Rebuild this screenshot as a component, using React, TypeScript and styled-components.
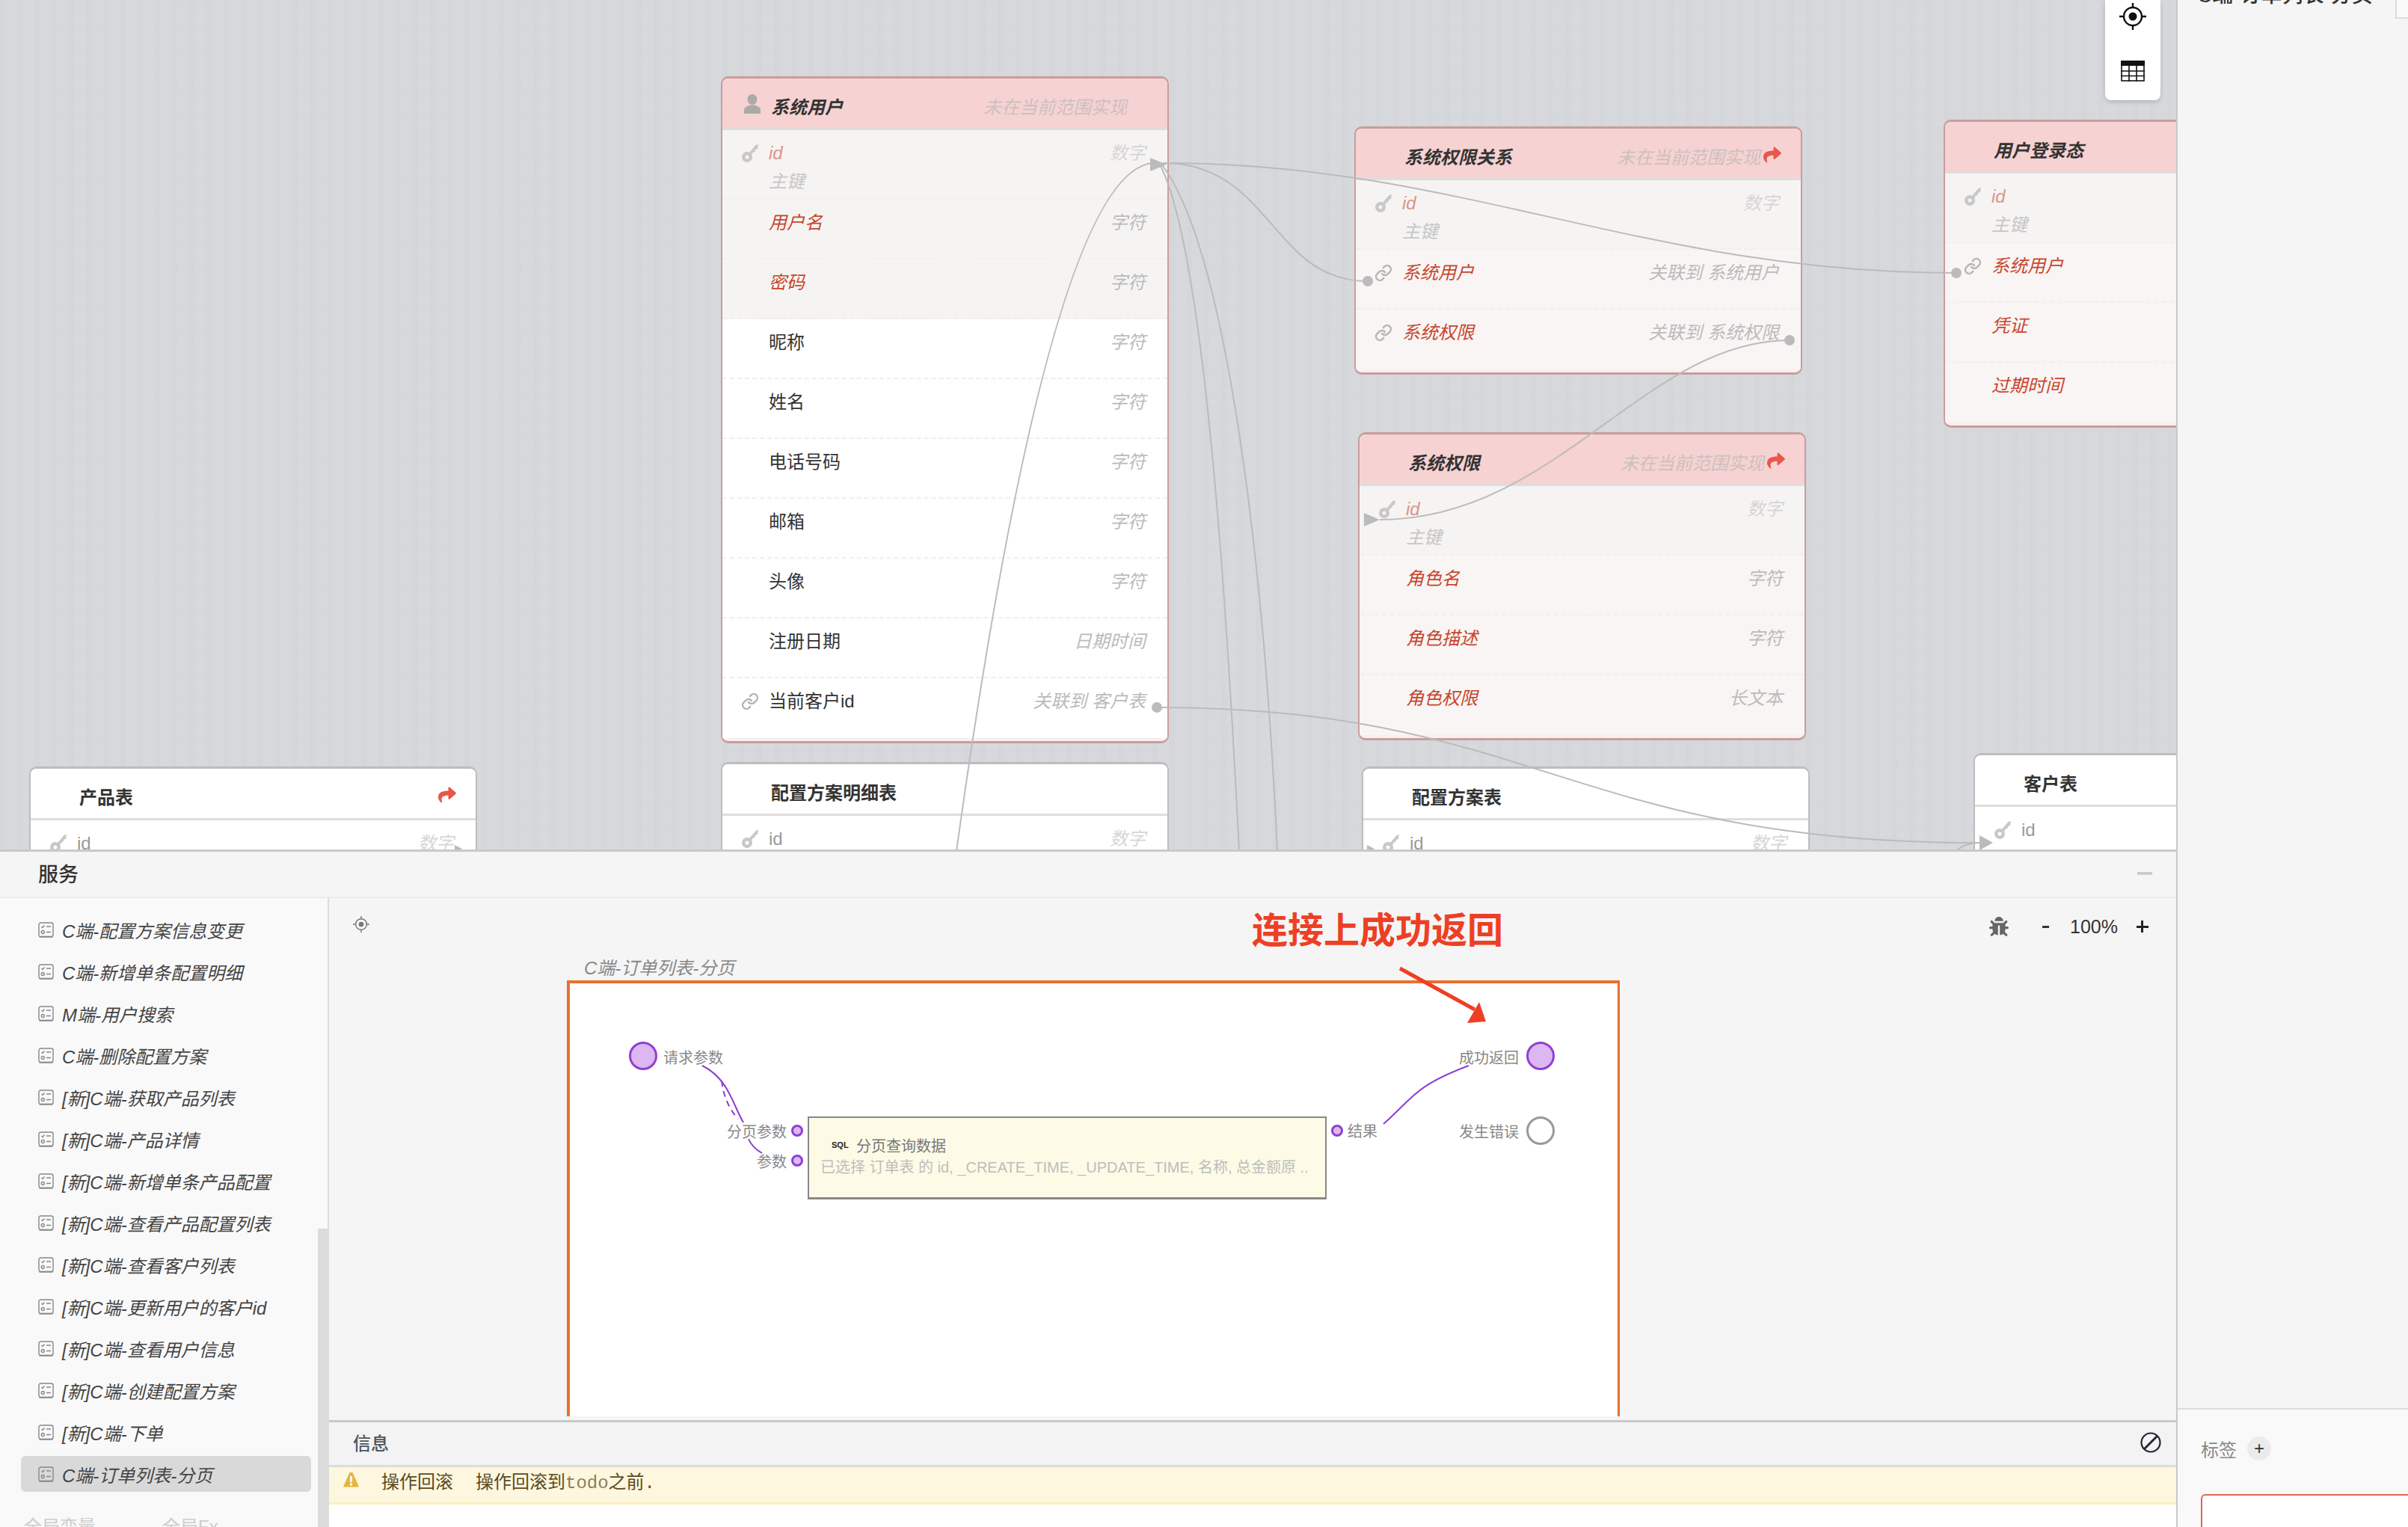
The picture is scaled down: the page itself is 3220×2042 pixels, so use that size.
import React from 'react';
import styled, { createGlobalStyle } from 'styled-components';
import { FaBug, FaShare } from 'react-icons/fa';
import { Link as LinkIcon } from 'lucide-react';

const FONT = `"Liberation Sans", "Noto Sans CJK SC", sans-serif`;
// flow items are given in page coordinates, these turn them into offsets in the flow area
const FLOW_X = 440;
const FLOW_Y = 1203;

const GlobalStyle = createGlobalStyle`
  html, body { margin: 0; padding: 0; background: #f5f5f5; }
  body { font-family: ${FONT}; color: #333; }
  * { box-sizing: border-box; }
`;

const Page = styled.div`
  position: relative;
  width: 3220px;
  height: 2042px;
  overflow: hidden;
  display: flex;
`;

const LeftColumn = styled.div`
  width: 2910px;
  height: 100%;
  display: flex;
  flex-direction: column;
`;

/* ---------- table canvas ---------- */

const Canvas = styled.div`
  position: relative;
  height: 1136px;
  flex: none;
  overflow: hidden;
  background-color: #d6d8dc;
  background-image:
    repeating-linear-gradient(0deg, rgba(255, 255, 255, 0.035) 0 5px, transparent 5px 17px),
    repeating-linear-gradient(90deg, rgba(120, 125, 135, 0.025) 0 7px, transparent 7px 23px);
`;

const Table = styled.div<{ $x: number; $y: number; $red?: boolean }>`
  position: absolute;
  left: ${p => p.$x}px;
  top: ${p => p.$y}px;
  width: 599px;
  border-radius: 10px;
  overflow: hidden;
  background: ${p => (p.$red ? '#f8f0ef' : '#fff')};
  border: 2px solid ${p => (p.$red ? '#c99d9b' : '#bdbdbd')};
  border-top-width: 3px;
  border-bottom-width: 3px;
  padding-bottom: ${p => (p.$red ? '4px' : '0')};
`;

const TableHead = styled.div<{ $red?: boolean }>`
  height: 69px;
  display: flex;
  align-items: center;
  padding: 7px 26px 0 0;
  font-size: 24px;
  background: ${p => (p.$red ? '#f6d2d2' : '#fff')};
  border-bottom: 3px solid #e0dddd;
`;

const HeadIcon = styled.div`
  width: 65px;
  flex: none;
  display: flex;
  justify-content: flex-end;
  padding-right: 14px;
  margin-top: -5px;
`;

const TableTitle = styled.span<{ $red?: boolean }>`
  flex: 1;
  font-weight: 700;
  color: #333;
  font-style: ${p => (p.$red ? 'italic' : 'normal')};
`;

const TableNote = styled.span`
  font-style: italic;
  color: #cdc0c0;
  margin-right: 4px;
`;

const RedirectSlot = styled.span`
  width: 24px;
  height: 24px;
  flex: none;
  color: #e8574b;
  margin-top: -4px;
  font-size: 24px;
  line-height: 24px;
`;

const Row = styled.div<{ $tone: 'plain' | 'red' | 'grey' }>`
  display: flex;
  align-items: flex-start;
  padding: 15px 29px 0 25px;
  height: 80px;
  font-size: 24px;
  line-height: 32px;
  background: ${p => (p.$tone === 'plain' ? '#fff' : p.$tone === 'grey' ? '#f6f4f3' : '#f8f5f4')};
  border-bottom: 2px dashed #efefef;
  &:last-child { border-bottom: none; }
`;

const IdRow = styled(Row)`
  height: 93px;
`;

const RowIcon = styled.span`
  width: 37px;
  height: 32px;
  flex: none;
  display: flex;
  align-items: center;
  color: #c8c8c8;
`;

const RowMain = styled.div`
  flex: 1;
`;

const FieldName = styled.div<{ $kind: 'plain' | 'red' | 'idRed' | 'idPlain' }>`
  font-style: ${p => (p.$kind === 'red' || p.$kind === 'idRed' ? 'italic' : 'normal')};
  color: ${p =>
    p.$kind === 'red' ? '#c9452d' : p.$kind === 'idRed' ? '#dd9488' : p.$kind === 'idPlain' ? '#999' : '#333'};
`;

const FieldSub = styled.div`
  margin-top: 6px;
  font-style: italic;
  color: #c6c6c6;
`;

const FieldType = styled.span<{ $faint?: boolean }>`
  font-style: italic;
  color: ${p => (p.$faint ? '#d6d6d6' : '#bbb')};
`;

const EdgeLayer = styled.svg`
  position: absolute;
  left: 0;
  top: 0;
  pointer-events: none;
`;

const Toolbar = styled.div`
  position: absolute;
  left: 2815px;
  top: 0;
  width: 74px;
  height: 134px;
  padding-top: 4px;
  display: flex;
  flex-direction: column;
  align-items: center;
  gap: 41px;
  background: #fff;
  border-radius: 0 0 8px 8px;
  box-shadow: 0 2px 6px rgba(0, 0, 0, 0.18);
`;

/* ---------- service panel ---------- */

const ServicePanel = styled.div`
  flex: 1;
  min-height: 0;
  display: flex;
  flex-direction: column;
  background: #f5f5f5;
  border-top: 3px solid #c9c9c9;
`;

const ServiceHead = styled.div`
  height: 62px;
  flex: none;
  display: flex;
  align-items: center;
  justify-content: space-between;
  padding: 0 32px 3px 51px;
  border-bottom: 2px solid #ececec;
  font-size: 27px;
  font-weight: 500;
  color: #333;
`;

const Minimize = styled.span`
  width: 20px;
  height: 4px;
  background: #ccc;
`;

const ServiceBody = styled.div`
  flex: 1;
  min-height: 0;
  display: flex;
`;

const Sidebar = styled.div`
  position: relative;
  width: 440px;
  flex: none;
  padding: 18px 0 0 28px;
  background: #f9f9f9;
  border-right: 2px solid #dcdcdc;
  overflow: hidden;
`;

const ServiceList = styled.div`
  width: 388px;
  display: flex;
  flex-direction: column;
  gap: 8px;
`;

const ServiceItem = styled.div<{ $active?: boolean }>`
  height: 48px;
  display: flex;
  align-items: center;
  gap: 11px;
  padding-left: 23px;
  border-radius: 6px;
  font-size: 24px;
  font-style: italic;
  color: #444;
  white-space: nowrap;
  background: ${p => (p.$active ? '#d9d9d9' : 'transparent')};
`;

const SideTabs = styled.div`
  display: flex;
  gap: 89px;
  margin: 27px 0 0 4px;
  font-size: 24px;
  color: #ccc;
`;

const ScrollThumb = styled.div`
  position: absolute;
  right: 0;
  top: 442px;
  bottom: 0;
  width: 13px;
  background: #dcdcdc;
`;

const MainColumn = styled.div`
  flex: 1;
  min-width: 0;
  display: flex;
  flex-direction: column;
`;

const FlowCanvas = styled.div`
  position: relative;
  flex: 1;
  min-height: 0;
  overflow: hidden;
`;

const LocateButton = styled.div`
  position: absolute;
  left: ${483 - 11 - FLOW_X}px;
  top: ${1238 - 11 - FLOW_Y}px;
  color: #777;
`;

const ZoomBar = styled.div`
  position: absolute;
  left: ${2660 - FLOW_X}px;
  top: ${1225 - FLOW_Y}px;
  display: flex;
  align-items: center;
  height: 32px;
  font-size: 25px;
  color: #333;
  svg { color: #666; }
`;

const ZoomMinus = styled.span`
  margin-left: 45px;
  width: 9px;
  height: 3px;
  background: #333;
`;

const ZoomValue = styled.span`
  margin-left: 28px;
`;

const ZoomPlus = styled.span`
  position: relative;
  margin-left: 25px;
  width: 16px;
  height: 3px;
  background: #222;
  &::after {
    content: '';
    position: absolute;
    left: 6px;
    top: -7px;
    width: 3px;
    height: 16px;
    background: #222;
  }
`;

const Annotation = styled.div`
  position: absolute;
  left: ${1674 - FLOW_X}px;
  top: ${1218 - FLOW_Y}px;
  font-size: 48px;
  line-height: 58px;
  font-weight: 700;
  color: #ee3f24;
  white-space: nowrap;
`;

const FlowTitle = styled.div`
  position: absolute;
  left: ${781 - FLOW_X}px;
  top: ${1281 - FLOW_Y}px;
  font-size: 24px;
  line-height: 32px;
  font-style: italic;
  color: #888;
`;

const FlowFrame = styled.div`
  position: absolute;
  left: ${758 - FLOW_X}px;
  top: ${1313 - FLOW_Y}px;
  width: 1408px;
  height: 583px;
  background: #fff;
  border: 3px solid #e8702f;
  border-top-width: 4px;
  border-left-width: 4px;
  border-bottom: none;
`;

const FlowLabel = styled.span<{ $x: number; $y: number; $end?: boolean }>`
  position: absolute;
  left: ${p => p.$x - FLOW_X}px;
  top: ${p => p.$y - FLOW_Y}px;
  transform: translate(${p => (p.$end ? '-100%' : '0')}, -50%);
  font-size: 20px;
  color: #888;
  white-space: nowrap;
`;

const Terminal = styled.span<{ $x: number; $y: number; $empty?: boolean }>`
  position: absolute;
  left: ${p => p.$x - 19 - FLOW_X}px;
  top: ${p => p.$y - 19 - FLOW_Y}px;
  width: 38px;
  height: 38px;
  border-radius: 50%;
  background: ${p => (p.$empty ? '#fff' : '#dcb7f1')};
  border: 3px solid ${p => (p.$empty ? '#999' : '#9040d2')};
`;

const Port = styled.span<{ $x: number; $y: number }>`
  position: absolute;
  left: ${p => p.$x - 8 - FLOW_X}px;
  top: ${p => p.$y - 8 - FLOW_Y}px;
  width: 16px;
  height: 16px;
  border-radius: 50%;
  background: #dcb7f1;
  border: 3px solid #9040d2;
`;

const SqlBox = styled.div`
  position: absolute;
  left: ${1080 - FLOW_X}px;
  top: ${1495 - FLOW_Y}px;
  width: 694px;
  height: 111px;
  padding: 22px 0 0 15px;
  background: #fdfbe6;
  border: 2px solid #888;
  border-bottom-width: 3px;
  white-space: nowrap;
`;

const SqlTitle = styled.div`
  display: flex;
  align-items: center;
  height: 28px;
  padding-left: 15px;
  font-size: 20px;
  color: #777;
`;

const SqlBadge = styled.span`
  width: 33px;
  font-size: 11px;
  font-weight: 700;
  color: #222;
`;

const SqlDesc = styled.div`
  margin-top: 2px;
  line-height: 28px;
  font-size: 20px;
  color: #bdbdbd;
`;

const InfoPanel = styled.div`
  flex: none;
  height: 143px;
  background: #fff;
  border-top: 3px solid #c9c9c9;
`;

const InfoHead = styled.div`
  height: 60px;
  display: flex;
  align-items: center;
  justify-content: space-between;
  padding: 0 20px 4px 32px;
  background: #f3f3f3;
  border-bottom: 3px solid #dcdcdc;
  font-size: 24px;
  font-weight: 500;
  color: #4a5560;
`;

const InfoMessage = styled.div`
  height: 50px;
  display: flex;
  align-items: flex-start;
  padding: 5px 0 0 19px;
  background: #fdf7df;
  border-bottom: 3px solid #fbf0bd;
  font-family: "Liberation Mono", "Noto Sans CJK SC", monospace;
  font-size: 24px;
  line-height: 34px;
  color: #5c4a22;
  svg { margin-top: 1px; }
`;

const InfoTitle = styled.span`
  margin: 0 30px 0 30px;
`;

const InfoCode = styled.span`
  color: #8d7d5a;
`;

/* ---------- right panel ---------- */

const RightPanel = styled.div`
  flex: 1;
  min-width: 0;
  display: flex;
  flex-direction: column;
  border-left: 2px solid #c9c9c9;
  overflow: hidden;
`;

const RightTop = styled.div`
  height: 1885px;
  flex: none;
  padding-left: 26px;
  background: #f5f5f5;
  border-bottom: 2px solid #dcdcdc;
  position: relative;
`;

const RightTitle = styled.div`
  margin-top: -26px;
  font-size: 28px;
  line-height: 40px;
  font-weight: 500;
  color: #333;
  white-space: nowrap;
`;

const TopCorner = styled.div`
  position: absolute;
  right: 0;
  top: 0;
  width: 17px;
  height: 25px;
  border: 2px solid #dcdcdc;
  border-top: none;
  border-right: none;
  background: #fafafa;
`;

const RightBottom = styled.div`
  flex: 1;
  padding: 36px 0 0 31px;
  background: #f9f9f9;
`;

const TagRow = styled.div`
  display: flex;
  align-items: center;
  gap: 14px;
  height: 32px;
  font-size: 24px;
  color: #888;
`;

const TagAdd = styled.span`
  width: 32px;
  height: 32px;
  border-radius: 50%;
  display: flex;
  align-items: center;
  justify-content: center;
  background: #ebebeb;
  color: #333;
  font-size: 24px;
`;

const RedBox = styled.div`
  width: 320px;
  height: 80px;
  margin-top: 45px;
  background: #fff;
  border: 2px solid #e26558;
  border-radius: 6px;
`;

const WatermarkLayer = styled.svg`
  position: absolute;
  left: 0;
  top: 0;
  pointer-events: none;
  font-family: "Liberation Sans", sans-serif;
  font-size: 25px;
  fill: rgba(0, 0, 0, 0.02);
`;

/* ---------- icons ---------- */

const KeyIcon = () => (
  <svg width="24" height="24" viewBox="0 0 24 24" fill="currentColor">
    <path fillRule="evenodd" d="M8 10a7 7 0 1 0 0 14a7 7 0 0 0 0-14Zm0 9.5a2.5 2.5 0 1 1 0-5a2.5 2.5 0 0 1 0 5Z" />
    <path d="M11 11 19.5 1 23 0 22 6 19 7 18.5 10 16 10.5 13.5 15Z" />
  </svg>
);

const PersonIcon = () => (
  <svg width="22" height="26" viewBox="0 0 22 26" fill="#aaa">
    <ellipse cx="11" cy="7" rx="6.5" ry="7" />
    <path d="M0 26v-5c0-4 5-5 8-6.500h6c3 1.500 8 2.500 8 6.500v5Z" />
  </svg>
);

const LocateIcon = ({ size = 36, color = '#111' }: { size?: number; color?: string }) => (
  <svg width={size} height={size} viewBox="0 0 36 36" fill="none" stroke={color} strokeWidth="2.4">
    <circle cx="18" cy="18" r="12" />
    <circle cx="18" cy="18" r="5.5" fill={color} stroke="none" />
    <path d="M18 0v6M18 30v6M0 18h6M30 18h6" />
  </svg>
);

const GridIcon = () => (
  <svg width="32" height="28" viewBox="0 0 32 28" fill="none" stroke="#111" strokeWidth="1.6">
    <rect x="1" y="1" width="30" height="26" />
    <rect x="0" y="0" width="32" height="7" fill="#111" stroke="none" />
    <path d="M0 14h32M0 20.500h32M11 7v21M21 7v21" />
  </svg>
);

const ListIcon = () => (
  <svg width="21" height="21" viewBox="0 0 21 21" fill="none" stroke="#888" strokeWidth="1.4">
    <rect x="1" y="1" width="19" height="18.500" rx="2.500" />
    <path d="M1.500 19.800h18" strokeWidth="1.800" />
    <path d="M4.500 6l1.500 1.500 2.500-3M11 6h6M11 13.500h6" />
    <circle cx="6.300" cy="13.500" r="2" />
  </svg>
);

const BanIcon = () => (
  <svg width="28" height="28" viewBox="0 0 28 28" fill="none" stroke="#25253a" strokeWidth="2.200">
    <circle cx="14" cy="14" r="12.500" />
    <path d="M5.500 22.500 22.500 5.500" strokeWidth="3" />
  </svg>
);

const WarnIcon = () => (
  <svg width="21" height="21" viewBox="0 0 21 21">
    <path d="M8.500 1h4L21 20.500H0Z" fill="#e3b63f" />
    <rect x="9" y="6" width="3" height="8" fill="#fff" />
    <rect x="9" y="15.500" width="3" height="3" fill="#fff" />
  </svg>
);

/* ---------- data ---------- */

type Field = { name: string; type: string; link?: boolean };

const userFields: Field[] = [
  { name: '用户名', type: '字符' },
  { name: '密码', type: '字符' },
  { name: '昵称', type: '字符' },
  { name: '姓名', type: '字符' },
  { name: '电话号码', type: '字符' },
  { name: '邮箱', type: '字符' },
  { name: '头像', type: '字符' },
  { name: '注册日期', type: '日期时间' },
  { name: '当前客户id', type: '关联到 客户表', link: true },
];

type TableDef = {
  title: string;
  x: number;
  y: number;
  red?: boolean;
  person?: boolean;
  note?: boolean;
  redirect?: boolean;
  fields: Field[];
  plainFrom?: number;
};

const tables: TableDef[] = [
  { title: '系统用户', x: 964, y: 102, red: true, person: true, note: true, fields: userFields, plainFrom: 2 },
  {
    title: '系统权限关系', x: 1811, y: 169, red: true, note: true, redirect: true,
    fields: [
      { name: '系统用户', type: '关联到 系统用户', link: true },
      { name: '系统权限', type: '关联到 系统权限', link: true },
    ],
  },
  {
    title: '用户登录态', x: 2599, y: 160, red: true, note: true,
    fields: [
      { name: '系统用户', type: '关联到 系统用户', link: true },
      { name: '凭证', type: '字符' },
      { name: '过期时间', type: '日期时间' },
    ],
  },
  {
    title: '系统权限', x: 1816, y: 578, red: true, note: true, redirect: true,
    fields: [
      { name: '角色名', type: '字符' },
      { name: '角色描述', type: '字符' },
      { name: '角色权限', type: '长文本' },
    ],
  },
  { title: '产品表', x: 39, y: 1025, redirect: true, fields: [] },
  { title: '配置方案明细表', x: 964, y: 1019, fields: [] },
  { title: '配置方案表', x: 1821, y: 1025, fields: [] },
  { title: '客户表', x: 2639, y: 1007, fields: [] },
];

const services = [
  'C端-配置方案信息变更',
  'C端-新增单条配置明细',
  'M端-用户搜索',
  'C端-删除配置方案',
  '[新]C端-获取产品列表',
  '[新]C端-产品详情',
  '[新]C端-新增单条产品配置',
  '[新]C端-查看产品配置列表',
  '[新]C端-查看客户列表',
  '[新]C端-更新用户的客户id',
  '[新]C端-查看用户信息',
  '[新]C端-创建配置方案',
  '[新]C端-下单',
  'C端-订单列表-分页',
];

const edgePaths = [
  'M1279 1138C1340 700 1430 218 1545 218',
  'M1550 218C1610 330 1640 800 1657 1138',
  'M1552 218C1640 330 1690 750 1708 1138',
  'M1555 218C1700 218 1700 376 1829 376',
  'M1558 218C1950 218 2200 365 2616 365',
  'M2393 455C2200 455 2080 695 1845 695',
  'M1547 946C2050 946 2100 1127 2647 1127',
  'M2616 1138C2622 1132 2630 1127 2647 1127',
];

const edgeDots = [
  [1829, 376],
  [2616, 365],
  [2393, 455],
  [1547, 946],
];

const edgeArrows = [
  '1538,211 1538,229 1560,220',
  '1824,686 1824,704 1845,695',
  '2647,1117 2647,1137 2665,1127',
  '1828,1130 1828,1140 1838,1135',
  '608,1130 608,1140 618,1135',
];

const watermarks: { x: number; y: number }[] = [];
for (let k = -1; k < 11; k++) {
  for (let j = -4; j < 27; j++) {
    watermarks.push({ x: k * 340, y: j * 80 + 5 });
  }
}

const DbTable = ({ def }: { def: TableDef }) => {
  const { red } = def;
  const idPlain = !red;
  return (
    <Table $x={def.x} $y={def.y} $red={red}>
      <TableHead $red={red}>
        <HeadIcon>{def.person && <PersonIcon />}</HeadIcon>
        <TableTitle $red={red}>{def.title}</TableTitle>
        {def.note && <TableNote>未在当前范围实现</TableNote>}
        <RedirectSlot>{def.redirect && <FaShare />}</RedirectSlot>
      </TableHead>
      <IdRow $tone={red ? 'grey' : 'plain'}>
        <RowIcon><KeyIcon /></RowIcon>
        <RowMain>
          <FieldName $kind={idPlain ? 'idPlain' : 'idRed'}>id</FieldName>
          <FieldSub>主键</FieldSub>
        </RowMain>
        <FieldType $faint>数字</FieldType>
      </IdRow>
      {def.fields.map((f, i) => {
        const plain = def.plainFrom !== undefined && i >= def.plainFrom;
        return (
          <Row key={f.name} $tone={plain ? 'plain' : def.plainFrom !== undefined ? 'grey' : 'red'}>
            <RowIcon>{f.link && <LinkIcon size={24} color="#b5b5b5" strokeWidth={2.4} />}</RowIcon>
            <RowMain>
              <FieldName $kind={plain ? 'plain' : 'red'}>{f.name}</FieldName>
            </RowMain>
            <FieldType>{f.type}</FieldType>
          </Row>
        );
      })}
    </Table>
  );
};

const App = () => (
  <Page>
    <GlobalStyle />
    <LeftColumn>
      <Canvas>
        {tables.map(t => <DbTable key={t.title} def={t} />)}
        <EdgeLayer width="2910" height="1136" viewBox="0 0 2910 1136" fill="none" stroke="#bbb" strokeWidth="2">
          {edgePaths.map(d => <path key={d} d={d} />)}
          {edgeDots.map(([cx, cy]) => <circle key={cx} cx={cx} cy={cy} r="7" fill="#bbb" stroke="none" />)}
          {edgeArrows.map(pts => <polygon key={pts} points={pts} fill="#bbb" stroke="none" />)}
        </EdgeLayer>
        <Toolbar>
          <LocateIcon />
          <GridIcon />
        </Toolbar>
      </Canvas>
      <ServicePanel>
        <ServiceHead>
          服务
          <Minimize />
        </ServiceHead>
        <ServiceBody>
          <Sidebar>
            <ServiceList>
              {services.map((s, i) => (
                <ServiceItem key={s} $active={i === services.length - 1}>
                  <ListIcon />
                  {s}
                </ServiceItem>
              ))}
            </ServiceList>
            <SideTabs>
              <span>全局变量</span>
              <span>全局Fx</span>
            </SideTabs>
            <ScrollThumb />
          </Sidebar>
          <MainColumn>
            <FlowCanvas>
              <LocateButton><LocateIcon size={22} color="#777" /></LocateButton>
              <FlowTitle>C端-订单列表-分页</FlowTitle>
              <FlowFrame />
              <Terminal $x={860} $y={1414} />
              <FlowLabel $x={887} $y={1415}>请求参数</FlowLabel>
              <FlowLabel $x={1052} $y={1514} $end>分页参数</FlowLabel>
              <FlowLabel $x={1052} $y={1554} $end>参数</FlowLabel>
              <Port $x={1066} $y={1514} />
              <Port $x={1066} $y={1554} />
              <SqlBox>
                <SqlTitle>
                  <SqlBadge>SQL</SqlBadge>
                  分页查询数据
                </SqlTitle>
                <SqlDesc>已选择 订单表 的 id, _CREATE_TIME, _UPDATE_TIME, 名称, 总金额原 ..</SqlDesc>
              </SqlBox>
              <Port $x={1788} $y={1514} />
              <FlowLabel $x={1802} $y={1513}>结果</FlowLabel>
              <FlowLabel $x={2031} $y={1415} $end>成功返回</FlowLabel>
              <FlowLabel $x={2031} $y={1514} $end>发生错误</FlowLabel>
              <Terminal $x={2060} $y={1414} />
              <Terminal $x={2060} $y={1514} $empty />
              <EdgeLayer
                width="2470"
                height="702"
                viewBox={`${FLOW_X} ${FLOW_Y} 2470 702`}
                fill="none"
                stroke="#8e3fd0"
                strokeWidth="2"
              >
                <path d="M939 1427C975 1445 980 1480 994 1503M1001 1525C1005 1535 1012 1540 1019 1544" />
                <path d="M965 1447C968 1470 975 1485 987 1498" strokeDasharray="8 6" />
                <path d="M1850 1505C1890 1470 1890 1455 1964 1427" />
                <path d="M1872 1297 1972 1352" stroke="#ee3f24" strokeWidth="5" />
                <polygon points="1978,1342 1987,1368 1962,1370" fill="#ee3f24" stroke="none" />
              </EdgeLayer>
              <Annotation>连接上成功返回</Annotation>
              <ZoomBar>
                <FaBug size={26} />
                <ZoomMinus />
                <ZoomValue>100%</ZoomValue>
                <ZoomPlus />
              </ZoomBar>
            </FlowCanvas>
            <InfoPanel>
              <InfoHead>
                信息
                <BanIcon />
              </InfoHead>
              <InfoMessage>
                <WarnIcon />
                <InfoTitle>操作回滚</InfoTitle>
                <span>操作回滚到<InfoCode>todo</InfoCode>之前.</span>
              </InfoMessage>
            </InfoPanel>
          </MainColumn>
        </ServiceBody>
      </ServicePanel>
    </LeftColumn>
    <RightPanel>
      <RightTop>
        <RightTitle>C端-订单列表-分页</RightTitle>
        <TopCorner />
      </RightTop>
      <RightBottom>
        <TagRow>
          标签
          <TagAdd>+</TagAdd>
        </TagRow>
        <RedBox />
      </RightBottom>
    </RightPanel>
    <WatermarkLayer width="3220" height="2042">
      {watermarks.map(({ x, y }) => (
        <g key={`${x}-${y}`}>
          <text transform={`translate(${x} ${y}) rotate(45)`}>moyukai05 - 2023/12/25</text>
          <text transform={`translate(${x - 25} ${y + 20}) rotate(45)`}>21:02:28</text>
        </g>
      ))}
    </WatermarkLayer>
  </Page>
);

export default App;
